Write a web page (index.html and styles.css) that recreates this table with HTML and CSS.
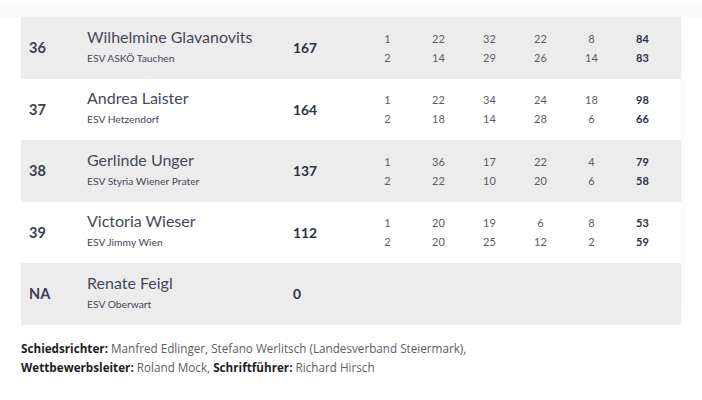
FILE: index.html
```html
<!DOCTYPE html>
<html lang="de">
<head>
<meta charset="utf-8">
<link rel="stylesheet" href="styles.css">
</head>
<body>
<div class="page">
  <div class="fade"></div>
  <div class="table">
    <div class="row alt">
      <div class="rank">36</div>
      <div class="who"><div class="name">Wilhelmine Glavanovits</div><div class="club">ESV ASKÖ Tauchen</div></div>
      <div class="total">167</div>
      <div class="nums">
        <span>1</span><span>22</span><span>32</span><span>22</span><span>8</span><span class="b">84</span>
        <span>2</span><span>14</span><span>29</span><span>26</span><span>14</span><span class="b">83</span>
      </div>
    </div>
    <div class="row">
      <div class="rank">37</div>
      <div class="who"><div class="name">Andrea Laister</div><div class="club">ESV Hetzendorf</div></div>
      <div class="total">164</div>
      <div class="nums">
        <span>1</span><span>22</span><span>34</span><span>24</span><span>18</span><span class="b">98</span>
        <span>2</span><span>18</span><span>14</span><span>28</span><span>6</span><span class="b">66</span>
      </div>
    </div>
    <div class="row alt">
      <div class="rank">38</div>
      <div class="who"><div class="name">Gerlinde Unger</div><div class="club">ESV Styria Wiener Prater</div></div>
      <div class="total">137</div>
      <div class="nums">
        <span>1</span><span>36</span><span>17</span><span>22</span><span>4</span><span class="b">79</span>
        <span>2</span><span>22</span><span>10</span><span>20</span><span>6</span><span class="b">58</span>
      </div>
    </div>
    <div class="row">
      <div class="rank">39</div>
      <div class="who"><div class="name">Victoria Wieser</div><div class="club">ESV Jimmy Wien</div></div>
      <div class="total">112</div>
      <div class="nums">
        <span>1</span><span>20</span><span>19</span><span>6</span><span>8</span><span class="b">53</span>
        <span>2</span><span>20</span><span>25</span><span>12</span><span>2</span><span class="b">59</span>
      </div>
    </div>
    <div class="row alt">
      <div class="rank">NA</div>
      <div class="who"><div class="name">Renate Feigl</div><div class="club">ESV Oberwart</div></div>
      <div class="total">0</div>
      <div class="nums"></div>
    </div>
  </div>
  <div class="footer">
    <p><b>Schiedsrichter:</b> Manfred Edlinger, Stefano Werlitsch (Landesverband Steiermark),</p>
    <p><b>Wettbewerbsleiter:</b> Roland Mock, <b>Schriftführer:</b> Richard Hirsch</p>
  </div>
</div>
</body>
</html>
```
FILE: styles.css
```css
html, body {
  margin: 0;
  padding: 0;
  background: #ffffff;
}
.page {
  width: 702px;
  height: 400px;
  position: relative;
  overflow: hidden;
  font-family: "Lato", "Open Sans", sans-serif;
}
.fade {
  height: 17px;
  background: linear-gradient(to bottom, #ffffff 0px, #f8f8f8 6px, #f9f9f9 17px);
}
.table {
  margin-left: 21px;
  width: 660px;
  box-shadow: 8px 0 10px -6px rgba(0,0,0,0.04);
}
.row {
  display: grid;
  grid-template-columns: 66px 206px 69px 1fr;
  align-items: center;
  height: 61.5px;
  background: #ffffff;
}
.row.alt {
  background: #ececec;
}
.rank {
  padding-left: 8px;
  font-size: 14.5px;
  font-weight: 700;
  color: #3b3d52;
}
.who {
  display: flex;
  flex-direction: column;
}
.name {
  font-size: 16px;
  line-height: 20px;
  color: #46485a;
}
.club {
  font-size: 10.3px;
  line-height: 22px;
  color: #46485a;
}
.total {
  font-size: 13.8px;
  font-weight: 700;
  color: #2e3047;
}
.nums {
  display: grid;
  grid-template-columns: repeat(6, 51px);
  grid-auto-rows: 19px;
  align-items: center;
  font-size: 11px;
  color: #5a5c6a;
}
.nums span {
  text-align: center;
}
.nums .b {
  font-weight: 700;
  color: #2e3047;
}
.footer {
  margin: 14px 0 0 21px;
  font-family: "Open Sans", sans-serif;
  font-size: 11.7px;
  line-height: 19px;
  color: #5e5e5e;
}
.footer p {
  margin: 0;
}
.footer b {
  font-weight: 700;
  color: #1e1e1e;
}
```
